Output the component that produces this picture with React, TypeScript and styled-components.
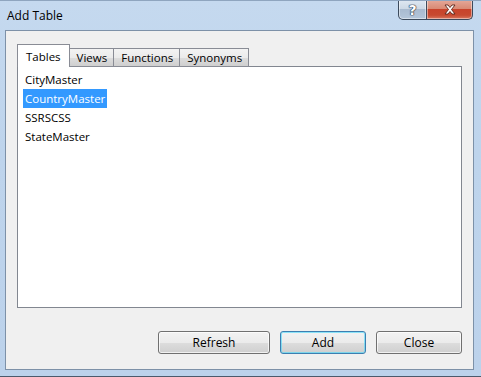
import styled, { createGlobalStyle } from 'styled-components';

const GlobalStyle = createGlobalStyle`
  html, body {
    margin: 0;
    padding: 0;
    background: #ffffff;
  }
  body {
    font-family: "Segoe UI", "Open Sans", "Noto Sans", sans-serif;
    font-size: 11.5px;
    color: #000;
  }
`;

// Window frame (Aero-ish light blue)
const Window = styled.div`
  width: 481px;
  height: 377px;
  box-sizing: border-box;
  display: flex;
  flex-direction: column;
  background: linear-gradient(180deg, #c5d9ef 0%, #bed4ec 40%, #bcd2eb 100%);
  border-top: 1px solid #8fa5bf;
  border-bottom: 1px solid #4b5a6c;
  overflow: hidden;
`;

const TitleBar = styled.div`
  height: 29px;
  display: flex;
  align-items: flex-start;
  justify-content: space-between;
  padding: 0 8px 0 7px;
`;

const Title = styled.div`
  line-height: 29px;
  font-size: 12px;
  color: #000;
`;

const Controls = styled.div`
  display: flex;
  margin-top: -1px;
`;

const CaptionButton = styled.div<{ $close?: boolean }>`
  width: ${(p) => (p.$close ? '46px' : '29px')};
  height: 20px;
  box-sizing: border-box;
  border: 1px solid #3c4a5c;
  border-top: none;
  border-left: ${(p) => (p.$close ? 'none' : '1px solid #3c4a5c')};
  border-radius: ${(p) => (p.$close ? '0 0 5px 0' : '0 0 0 5px')};
  display: flex;
  align-items: center;
  justify-content: center;
  background: ${(p) =>
    p.$close
      ? 'linear-gradient(180deg, #e5a99a 0%, #d98a74 45%, #c8432b 50%, #c74a30 80%, #d97860 100%)'
      : 'linear-gradient(180deg, #dfe8f2 0%, #cdd9e6 45%, #a9bbd0 50%, #b4c6da 100%)'};
  box-shadow: inset 0 0 0 1px rgba(255, 255, 255, 0.45);
`;

const HelpGlyph = styled.span`
  font-family: "DejaVu Sans", sans-serif;
  font-weight: bold;
  font-size: 14px;
  color: #ffffff;
  line-height: 1;
  text-shadow: 0 0 1px #2d3a4c, 0 0 1px #2d3a4c, 0 0 1px #2d3a4c, 0 0 1px #2d3a4c;
`;

const Body = styled.div`
  flex: 1;
  display: flex;
  padding: 0 7px 6px 5px;
`;

const Client = styled.div`
  flex: 1;
  display: flex;
  flex-direction: column;
  background: #f0f0f0;
  border: 1px solid #7d91a8;
  padding: 13px 11px 0 11px;
`;

const TabStrip = styled.div`
  display: flex;
  align-items: flex-end;
  height: 23px;
  position: relative;
  z-index: 1;
  margin-bottom: -1px;
`;

const Tab = styled.div<{ $active?: boolean }>`
  height: ${(p) => (p.$active ? '23px' : '19px')};
  box-sizing: border-box;
  padding: 0 ${(p) => (p.$active ? '8px' : '6px')} 0 ${(p) => (p.$active ? '8px' : '7px')};
  display: flex;
  align-items: center;
  border: 1px solid #898c95;
  border-bottom: ${(p) => (p.$active ? 'none' : '1px solid #898c95')};
  margin-left: -1px;
  background: ${(p) =>
    p.$active ? '#ffffff' : 'linear-gradient(180deg, #f3f3f3 0%, #ebebeb 50%, #dddddd 51%, #cfcfcf 100%)'};
  &:first-child {
    margin-left: 0;
  }
`;

const Panel = styled.div`
  height: 242px;
  box-sizing: border-box;
  background: #ffffff;
  border: 1px solid #828790;
  padding: 3px 5px;
`;

const ItemList = styled.ul`
  list-style: none;
  margin: 0;
  padding: 0;
  display: flex;
  flex-direction: column;
  align-items: flex-start;
`;

const Item = styled.li<{ $selected?: boolean }>`
  height: 19px;
  line-height: 19px;
  padding: 0 2px;
  background: ${(p) => (p.$selected ? '#3399ff' : 'transparent')};
  color: ${(p) => (p.$selected ? '#ffffff' : '#000000')};
`;

const ButtonRow = styled.div`
  display: flex;
  justify-content: flex-end;
  gap: 10px;
  margin-top: 23px;
`;

const Button = styled.button<{ $wide?: boolean; $default?: boolean }>`
  width: ${(p) => (p.$wide ? '112px' : '86px')};
  height: 23px;
  font-family: inherit;
  font-size: 12px;
  color: #000;
  border-radius: 3px;
  border: 1px solid ${(p) => (p.$default ? '#3c7fb1' : '#707070')};
  background: linear-gradient(180deg, #f2f2f2 0%, #ebebeb 50%, #dddddd 51%, #cfcfcf 100%);
  box-shadow: inset 0 0 0 1px ${(p) => (p.$default ? 'rgba(72, 216, 251, 0.6)' : 'rgba(255,255,255,0.7)')};
  padding: 0;
`;

const items = ['CityMaster', 'CountryMaster', 'SSRSCSS', 'StateMaster'];
const tabs = ['Tables', 'Views', 'Functions', 'Synonyms'];

export default function App() {
  return (
    <>
      <GlobalStyle />
      <Window>
        <TitleBar>
          <Title>Add Table</Title>
          <Controls>
            <CaptionButton>
              <HelpGlyph>?</HelpGlyph>
            </CaptionButton>
            <CaptionButton $close>
              <svg width="14" height="11" viewBox="0 0 14 11">
                <path
                  d="M2 1 L5 1 L7 3.5 L9 1 L12 1 L8.5 5.5 L12 10 L9 10 L7 7.5 L5 10 L2 10 L5.5 5.5 Z"
                  fill="#ffffff"
                  stroke="#5a2418"
                  strokeWidth="0.9"
                  strokeLinejoin="round"
                />
              </svg>
            </CaptionButton>
          </Controls>
        </TitleBar>
        <Body>
          <Client>
            <TabStrip>
              {tabs.map((t, i) => (
                <Tab key={t} $active={i === 0}>
                  {t}
                </Tab>
              ))}
            </TabStrip>
            <Panel>
              <ItemList>
                {items.map((name) => (
                  <Item key={name} $selected={name === 'CountryMaster'}>
                    {name}
                  </Item>
                ))}
              </ItemList>
            </Panel>
            <ButtonRow>
              <Button $wide>Refresh</Button>
              <Button $default>Add</Button>
              <Button>Close</Button>
            </ButtonRow>
          </Client>
        </Body>
      </Window>
    </>
  );
}
